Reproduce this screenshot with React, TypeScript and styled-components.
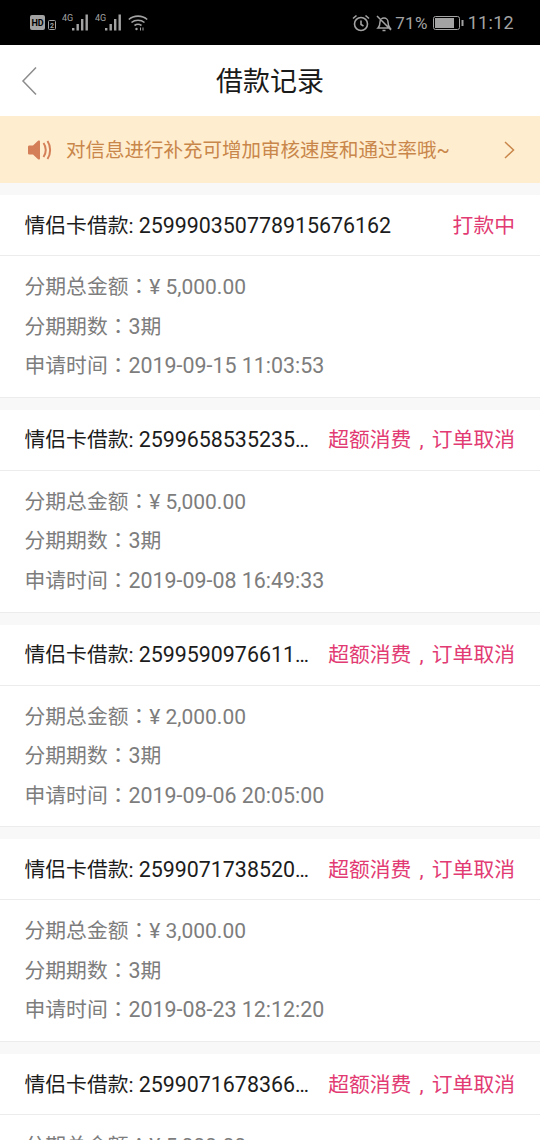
import styled, { createGlobalStyle } from 'styled-components'

const GlobalStyle = createGlobalStyle`
    html, body {
        margin: 0;
        padding: 0;
        background: #f8f8f8;
    }
    body {
        font-family: Roboto, "Noto Sans CJK SC", sans-serif;
        overflow: hidden;
    }
`

const Page = styled.div`
    width: 540px;
    height: 1140px;
    overflow: hidden;
    background: #f8f8f8;
`

const StatusBar = styled.div`
    height: 45px;
    background: #000;
    color: #a3a3a3;
    display: flex;
    align-items: center;
    justify-content: space-between;
    padding: 0 26px 0 30px;
    box-sizing: border-box;
`

const StatusGroup = styled.div<{ $gap?: number }>`
    display: flex;
    align-items: center;
    gap: ${p => p.$gap ?? 0}px;
`

const StatusText = styled.span<{ $left?: number; $size?: number }>`
    font-size: ${p => p.$size ?? 17}px;
    line-height: 20px;
    margin-left: ${p => p.$left ?? 0}px;
    letter-spacing: 0.3px;
`

const NavBar = styled.div`
    height: 71px;
    background: #fff;
    display: flex;
    align-items: center;
    justify-content: center;
    position: relative;
    box-sizing: border-box;
    padding-bottom: 3px;
`

const BackIcon = styled.svg`
    position: absolute;
    left: 21px;
    top: 21px;
`

const Title = styled.h1`
    margin: 0;
    font-size: 27px;
    font-weight: 400;
    color: #1a1a1a;
`

const Notice = styled.div`
    height: 67px;
    background: #feedcf;
    display: flex;
    align-items: center;
    padding: 0 25px 0 28px;
    color: #c9864a;
    font-size: 19.5px;
`

const NoticeText = styled.span`
    flex: 1;
    margin-left: 14px;
    padding-bottom: 2px;
`

const List = styled.div`
    padding-top: 12px;
`

const Card = styled.section`
    background: #fff;
    margin-bottom: 12px;
    border-bottom: 1px solid #ececec;
`

const CardHead = styled.div`
    height: 57px;
    display: flex;
    align-items: center;
    padding: 0 25px 3px 24.5px;
    border-bottom: 1px solid #ececec;
    font-size: 20.8px;
`

const OrderName = styled.span`
    flex: 1;
    min-width: 0;
    color: #1c1c1c;
    white-space: nowrap;
    overflow: hidden;
    text-overflow: ellipsis;
    padding-right: 14px;
`

const Digits = styled.span<{ $size?: number }>`
    font-size: ${p => p.$size ?? 21.4}px;
`

const OrderState = styled.span`
    color: #e23a72;
    white-space: nowrap;
    word-spacing: 3px;
`

const CardBody = styled.div`
    padding: 10px 25px 12.25px 24.5px;
`

const InfoRow = styled.div`
    height: 39.5px;
    line-height: 39.5px;
    font-size: 20.8px;
    color: #7d7d7d;
`

// the colon sits in the middle of its cell in the reference, as in the TC face
const Colon = styled.span`
    font-family: "Noto Sans CJK TC", sans-serif;
`

const orders = [
    { no: '259990350778915676162', state: '打款中', amount: '5,000.00', time: '2019-09-15 11:03:53' },
    { no: '25996585352351234567890', state: '超额消费 , 订单取消', amount: '5,000.00', time: '2019-09-08 16:49:33' },
    { no: '25995909766111234567890', state: '超额消费 , 订单取消', amount: '2,000.00', time: '2019-09-06 20:05:00' },
    { no: '25990717385201234567890', state: '超额消费 , 订单取消', amount: '3,000.00', time: '2019-08-23 12:12:20' },
    { no: '25990716783661234567890', state: '超额消费 , 订单取消', amount: '5,000.00', time: '2019-08-23 12:10:06' },
]

function SignalIcon() {
    return (
        <svg width="28" height="20" viewBox="0 0 28 20" fill="#a3a3a3">
            <text x="0" y="8" fontSize="9" fontFamily="Roboto, sans-serif">4G</text>
            <rect x="10" y="15" width="2.400" height="2.500" />
            <rect x="14.500" y="11" width="2.400" height="6.500" />
            <rect x="19" y="6" width="2.400" height="11.500" />
            <rect x="23.500" y="1.500" width="2.400" height="16" />
        </svg>
    )
}

function App() {
    return (
        <Page>
            <GlobalStyle />
            <StatusBar>
                <StatusGroup $gap={5}>
                    <svg width="27" height="16" viewBox="0 0 27 16">
                        <rect x="0" y="0" width="15" height="15" rx="2" fill="#a3a3a3" />
                        <text x="1.500" y="11" fontSize="9" fontWeight="700" fill="#000" fontFamily="Roboto, sans-serif">HD</text>
                        <rect x="18.500" y="5.500" width="7" height="9" rx="1" fill="none" stroke="#a3a3a3" />
                        <text x="20" y="13" fontSize="7" fontWeight="700" fill="#a3a3a3" fontFamily="Roboto, sans-serif">2</text>
                    </svg>
                    <SignalIcon />
                    <SignalIcon />
                    <svg width="20" height="18" viewBox="0 0 20 18" fill="none" stroke="#a3a3a3" strokeWidth="1.600">
                        <path d="M.8 5.500c5-4.500 13.400-4.500 18.400 0" />
                        <path d="M3.500 8.500c3.600-3 9.400-3 13 0" />
                        <path d="M6.500 11.500c2-1.400 5-1.400 7 0" />
                        <circle cx="8.500" cy="15" r="1.200" fill="#a3a3a3" stroke="none" />
                        <path d="M12.500 13.500v3M15 13.500v3" strokeWidth="1" />
                    </svg>
                </StatusGroup>
                <StatusGroup>
                    <svg width="18" height="18" viewBox="0 0 18 18" fill="none" stroke="#a3a3a3" strokeWidth="1.600">
                        <circle cx="9" cy="10" r="6.500" />
                        <path d="M9 6.500v4l2.500 1.500M1 4.500 4.500 1.500M17 4.500l-3.500-3" />
                    </svg>
                    <svg width="18" height="18" viewBox="0 0 18 18" fill="none" stroke="#a3a3a3" strokeWidth="1.500" style={{ marginLeft: 5 }}>
                        <path d="M3 14c1.500-1.500 2-3 2-6a4 4 0 0 1 8 0c0 3 .5 4.500 2 6zM7.500 16.500h3M2 2l14 14" />
                    </svg>
                    <StatusText $left={2}>71%</StatusText>
                    <svg width="31" height="16" viewBox="0 0 31 16" style={{ marginLeft: 5 }}>
                        <rect x="0.500" y="1.500" width="26" height="13" rx="2" fill="none" stroke="#a3a3a3" />
                        <rect x="2" y="3" width="19" height="10" fill="#a3a3a3" />
                        <rect x="28.500" y="5" width="2" height="6" fill="#a3a3a3" />
                    </svg>
                    <StatusText $left={4} $size={18}>11:12</StatusText>
                </StatusGroup>
            </StatusBar>
            <NavBar>
                <BackIcon width="16" height="30" viewBox="0 0 16 30" fill="none" stroke="#8c8c8c" strokeWidth="1.500">
                    <path d="M15 1.500 2 15l13 13.500" />
                </BackIcon>
                <Title>借款记录</Title>
            </NavBar>
            <Notice>
                <svg width="24" height="20" viewBox="0 0 24 20">
                    <path d="M1.500 5.500H5L10 .8C11 0 12 .5 12 1.500v17c0 1-1 1.500-2 .7L5 14.500H1.500C.5 14.500 0 14 0 13V7c0-1 .5-1.500 1.500-1.500z" fill="#d47f58" />
                    <path d="M15.500 3c3 4 3 10 0 14M19.500 1c3.500 5 3.500 13 0 18" fill="none" stroke="#d47f58" strokeWidth="2" />
                </svg>
                <NoticeText>对信息进行补充可增加审核速度和通过率哦~</NoticeText>
                <svg width="11" height="18" viewBox="0 0 11 18" fill="none" stroke="#c9864a" strokeWidth="1.500">
                    <path d="M1 1l8.500 8L1 17" />
                </svg>
            </Notice>
            <List>
                {orders.map(o => (
                    <Card key={o.no}>
                        <CardHead>
                            <OrderName>情侣卡借款: <Digits>{o.no}</Digits></OrderName>
                            <OrderState>{o.state}</OrderState>
                        </CardHead>
                        <CardBody>
                            <InfoRow>分期总金额<Colon>：</Colon><Digits $size={21}>¥ {o.amount}</Digits></InfoRow>
                            <InfoRow>分期期数<Colon>：</Colon><Digits>3</Digits>期</InfoRow>
                            <InfoRow>申请时间<Colon>：</Colon><Digits>{o.time}</Digits></InfoRow>
                        </CardBody>
                    </Card>
                ))}
            </List>
        </Page>
    )
}

export default App
